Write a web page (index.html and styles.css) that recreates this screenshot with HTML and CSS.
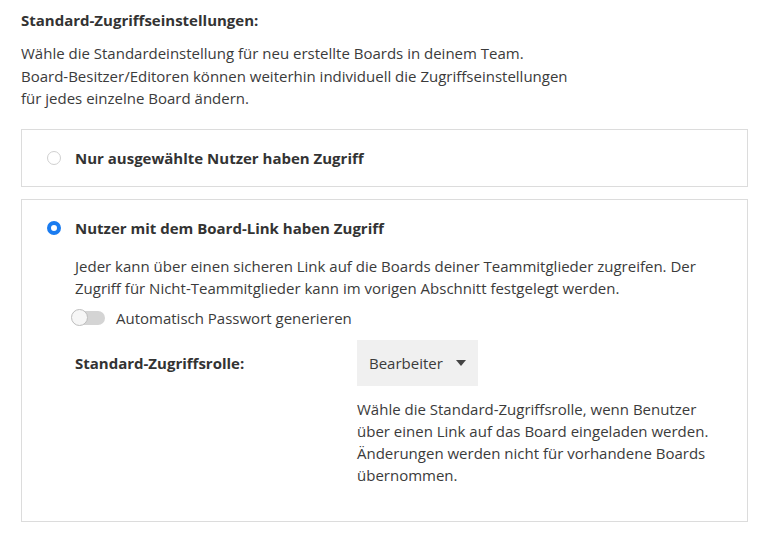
FILE: index.html
```html
<!DOCTYPE html>
<html>
    <head>
        <title>Standard-Zugriffseinstellungen</title>
        <link rel="stylesheet" href="styles.css">
    </head>
    <body>
        <div class="settings">
            <p class="title">Standard-Zugriffseinstellungen:</p>
            <p class="intro">
                Wähle die Standardeinstellung für neu erstellte Boards in deinem Team.<br>
                Board-Besitzer/Editoren können weiterhin individuell die Zugriffseinstellungen<br>
                für jedes einzelne Board ändern.
            </p>

            <div class="option">
                <div class="option-head">
                    <span class="radio"></span>
                    <span class="option-label">Nur ausgewählte Nutzer haben Zugriff</span>
                </div>
            </div>

            <div class="option open">
                <div class="option-head">
                    <span class="radio checked"></span>
                    <span class="option-label">Nutzer mit dem Board-Link haben Zugriff</span>
                </div>

                <div class="option-body">
                    <p class="hint">Jeder kann über einen sicheren Link auf die Boards deiner Teammitglieder zugreifen. Der Zugriff für Nicht-Teammitglieder kann im vorigen Abschnitt festgelegt werden.</p>

                    <div class="toggle-row">
                        <span class="toggle"><span class="knob"></span></span>
                        <span>Automatisch Passwort generieren</span>
                    </div>

                    <div class="role">
                        <span class="role-label">Standard-Zugriffsrolle:</span>
                        <div class="role-field">
                            <button class="select" type="button">
                                Bearbeiter
                                <svg width="10" height="6" viewBox="0 0 10 6"><path d="M0 0 L10 0 L5 6 Z" fill="#444"/></svg>
                            </button>
                            <p class="role-note">Wähle die Standard-Zugriffsrolle, wenn Benutzer über einen Link auf das Board eingeladen werden. Änderungen werden nicht für vorhandene Boards übernommen.</p>
                        </div>
                    </div>
                </div>
            </div>
        </div>
    </body>
</html>
```

FILE: styles.css
```css
body {
    background-color: white;
    color: #3b3b3b;
    font-family: "Open Sans", "Liberation Sans", sans-serif;
    font-size: 15px;
    line-height: 22px;
    margin: 0;
}

p {
    margin: 0;
}

.settings {
    padding: 9px 22px 0 21px;
}

.title {
    color: #333;
    font-weight: 700;
}

.intro {
    line-height: 22.5px;
    margin-top: 11px;
}

.option {
    border: 1px solid #dcdcdc;
    margin-top: 19px;
    padding: 17px 25px;
}

.option.open {
    margin-top: 12px;
    padding-bottom: 35px;
}

.option-head {
    align-items: center;
    display: flex;
    gap: 14px;
}

.option-label {
    color: #333;
    font-weight: 700;
}

.radio {
    border: 1px solid #d0d0d0;
    border-radius: 50%;
    box-sizing: border-box;
    display: inline-block;
    height: 14px;
    width: 14px;
}

.radio.checked {
    border: 4px solid #1a7cf0;
}

.option-body {
    padding: 16px 0 0 28px;
}

.hint {
    padding-right: 25px;
}

.toggle-row {
    align-items: center;
    display: flex;
    gap: 11px;
    margin: 8px 0 0 -3px;
}

.toggle {
    background-color: #d4d4d4;
    border-radius: 8px;
    display: inline-block;
    height: 14px;
    position: relative;
    width: 33px;
}

.knob {
    background-color: #f6f6f6;
    border: 1px solid #bdbdbd;
    border-radius: 50%;
    box-sizing: border-box;
    height: 17px;
    left: -1px;
    position: absolute;
    top: -1.5px;
    width: 17px;
}

.role {
    display: flex;
    margin-top: 11px;
}

.role-label {
    color: #333;
    font-weight: 700;
    padding-top: 12px;
    width: 282px;
}

.select {
    align-items: center;
    background-color: #f0f0f0;
    border: none;
    color: #3b3b3b;
    display: flex;
    font-family: inherit;
    font-size: 15px;
    gap: 13px;
    height: 46px;
    line-height: 22px;
    padding: 0 12px;
    width: 121px;
}

.role-note {
    margin-top: 12px;
    width: 365px;
}
```
